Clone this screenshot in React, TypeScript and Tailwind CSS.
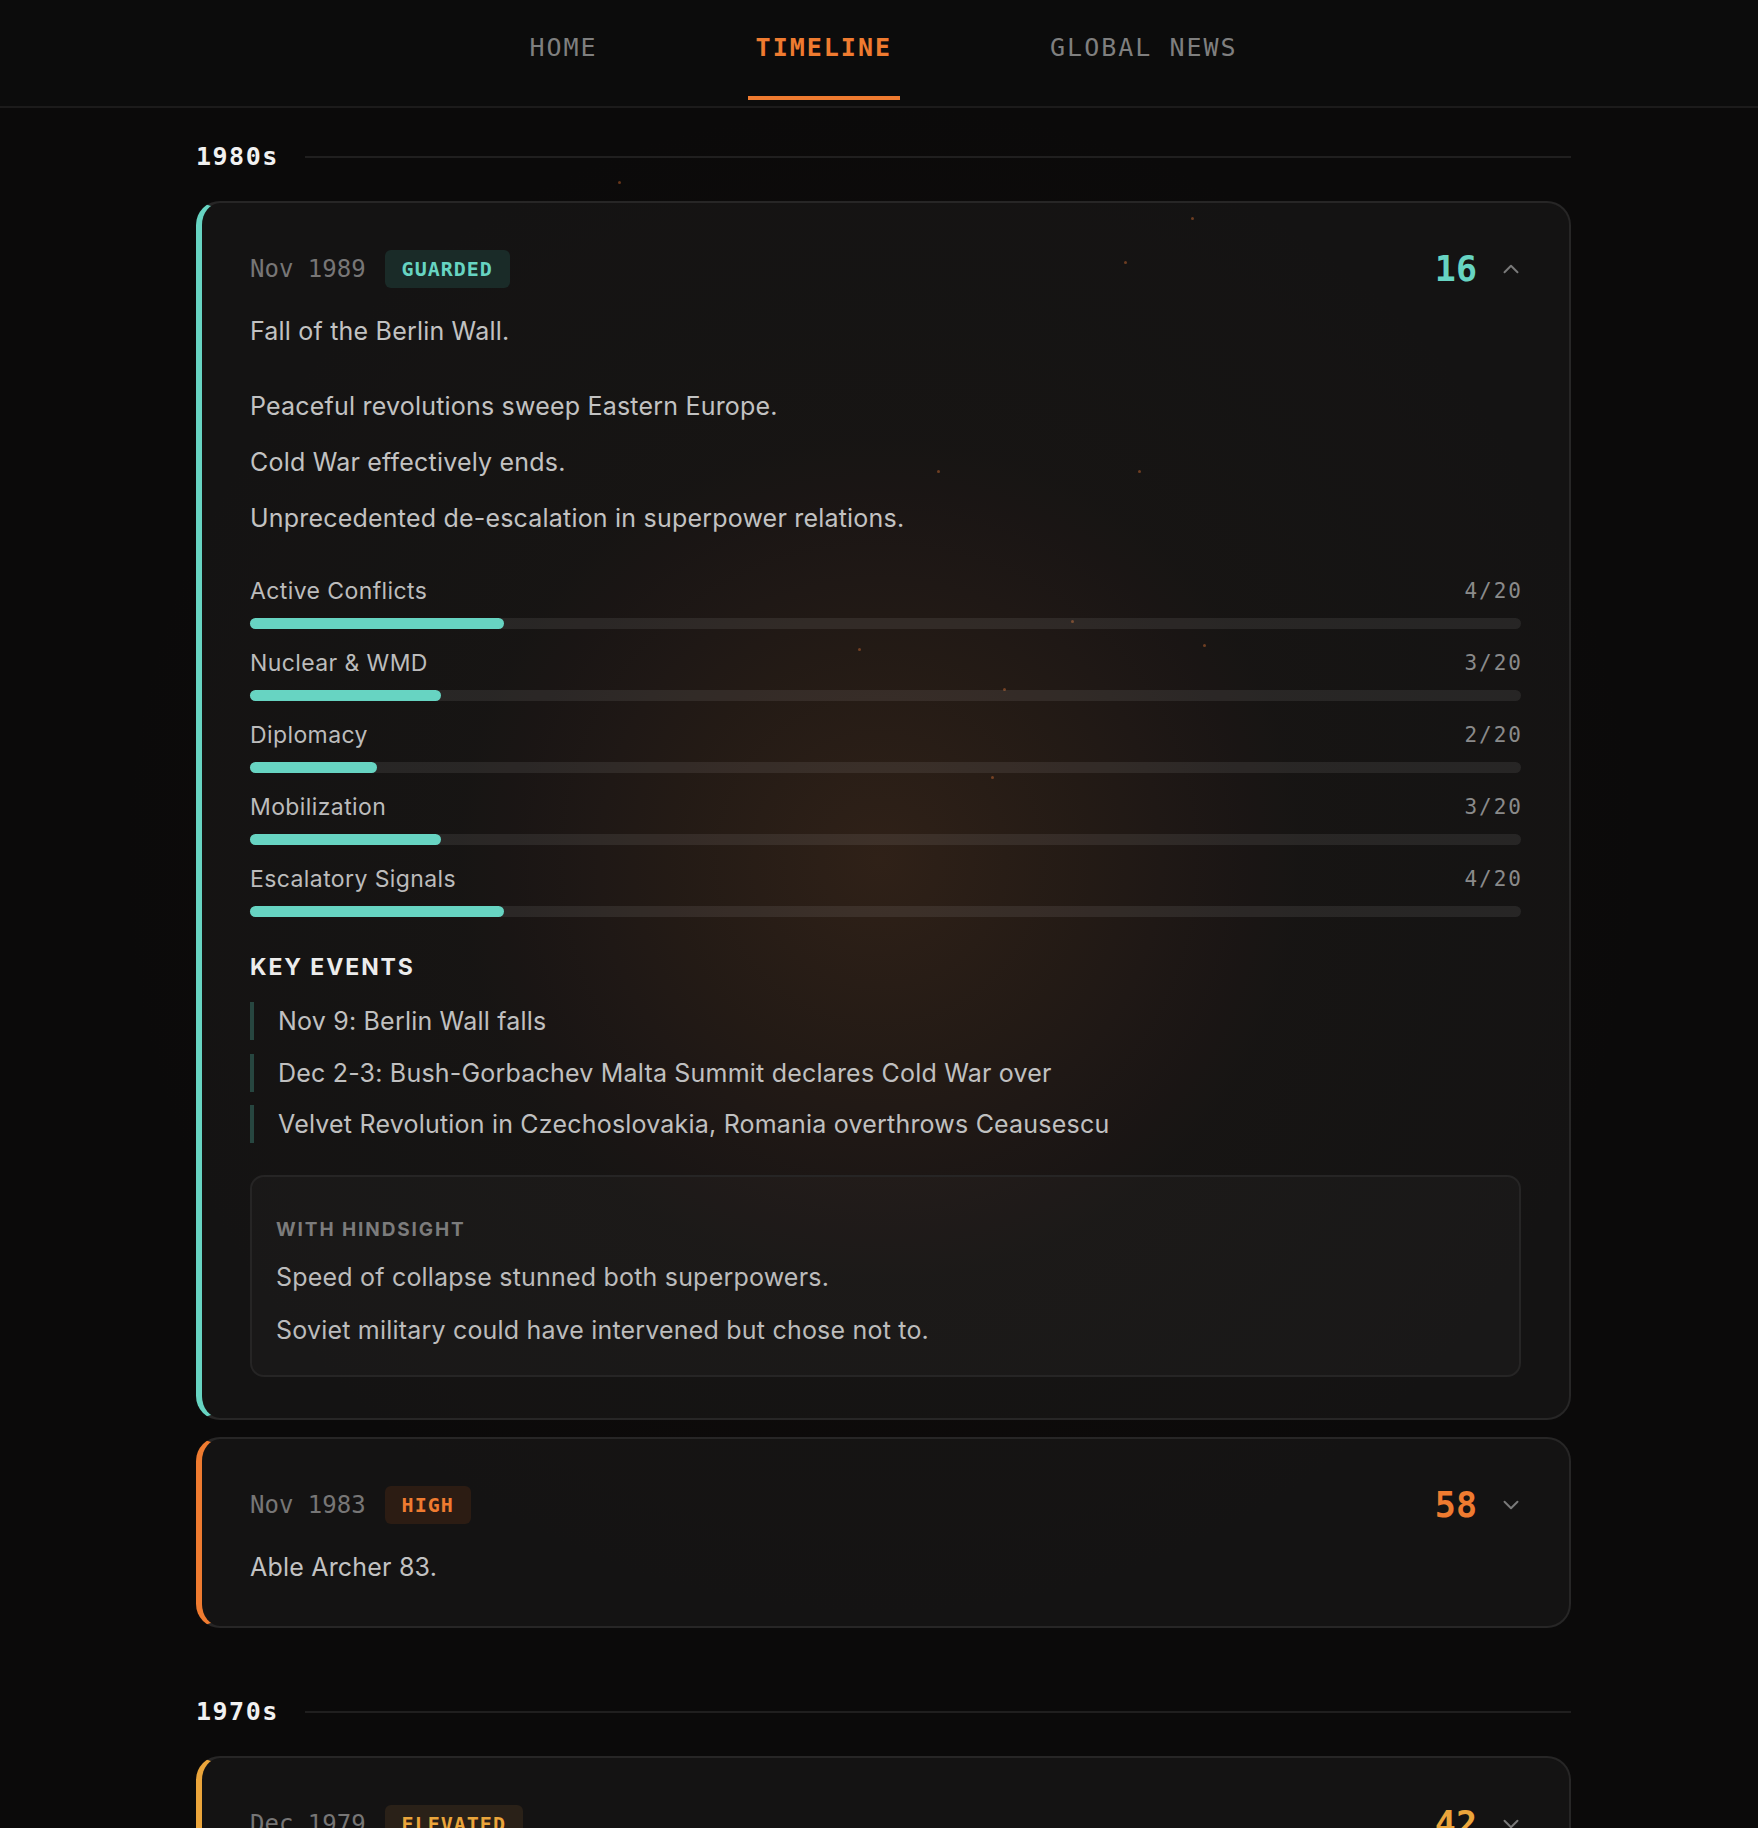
import React from "react";
import { ChevronUp, ChevronDown } from "lucide-react";

type Metric = { label: string; value: number };

type Entry = {
	date: string;
	level: "GUARDED" | "HIGH" | "ELEVATED";
	score: number;
	title: string;
	details?: string[];
	metrics?: Metric[];
	keyEvents?: string[];
	hindsight?: string[];
	open?: boolean;
};

const levelStyles = {
	GUARDED: {
		edge: "border-l-[#67d4c2]",
		badge: "bg-[#1a2b28] text-[#67d4c2]",
		score: "text-[#67d4c2]",
		bar: "bg-[#67d4c2]",
	},
	HIGH: {
		edge: "border-l-[#ef7b30]",
		badge: "bg-[#2c1c13] text-[#ef7b30]",
		score: "text-[#ef7b30]",
		bar: "bg-[#ef7b30]",
	},
	ELEVATED: {
		edge: "border-l-[#eba53b]",
		badge: "bg-[#2a2118] text-[#eba53b]",
		score: "text-[#eba53b]",
		bar: "bg-[#eba53b]",
	},
};

const decades: { label: string; entries: Entry[] }[] = [
	{
		label: "1980s",
		entries: [
			{
				date: "Nov 1989",
				level: "GUARDED",
				score: 16,
				open: true,
				title: "Fall of the Berlin Wall.",
				details: [
					"Peaceful revolutions sweep Eastern Europe.",
					"Cold War effectively ends.",
					"Unprecedented de-escalation in superpower relations.",
				],
				metrics: [
					{ label: "Active Conflicts", value: 4 },
					{ label: "Nuclear & WMD", value: 3 },
					{ label: "Diplomacy", value: 2 },
					{ label: "Mobilization", value: 3 },
					{ label: "Escalatory Signals", value: 4 },
				],
				keyEvents: [
					"Nov 9: Berlin Wall falls",
					"Dec 2-3: Bush-Gorbachev Malta Summit declares Cold War over",
					"Velvet Revolution in Czechoslovakia, Romania overthrows Ceausescu",
				],
				hindsight: [
					"Speed of collapse stunned both superpowers.",
					"Soviet military could have intervened but chose not to.",
				],
			},
			{
				date: "Nov 1983",
				level: "HIGH",
				score: 58,
				title: "Able Archer 83.",
			},
		],
	},
	{
		label: "1970s",
		entries: [
			{
				date: "Dec 1979",
				level: "ELEVATED",
				score: 42,
				title: "Soviet invasion of Afghanistan.",
			},
		],
	},
];

// faint ember specks floating over the page
const specks = [
	[618, 181],
	[937, 470],
	[1071, 620],
	[858, 648],
	[1203, 644],
	[1003, 688],
	[1138, 470],
	[1124, 261],
	[1191, 217],
	[991, 776],
];

const EntryCard = ({ entry }: { entry: Entry }) => {
	const s = levelStyles[entry.level];
	return (
		<div
			className={`rounded-[24px] border-2 border-[#272626] border-l-[6px] ${s.edge} bg-white/[0.035] pl-12 pr-12 pt-[46px] pb-[41px]`}
		>
			<div className="flex items-center justify-between h-10">
				<div className="flex items-center gap-[19px]">
					<span className="font-['DejaVu_Sans_Mono',monospace] text-[24px] text-[#777676]">
						{entry.date}
					</span>
					<span
						className={`font-['DejaVu_Sans_Mono',monospace] font-bold text-[20px] tracking-[1px] leading-[38px] px-[17px] rounded-[6px] ${s.badge}`}
					>
						{entry.level}
					</span>
				</div>
				<div className="flex items-center gap-[21px] mr-[-3px]">
					<span
						className={`font-['DejaVu_Sans_Mono',monospace] font-bold text-[35px] leading-10 ${s.score}`}
					>
						{entry.score}
					</span>
					{entry.open ? (
						<ChevronUp size={26} strokeWidth={1.8} color="#7a7a7a" />
					) : (
						<ChevronDown size={26} strokeWidth={1.8} color="#7a7a7a" />
					)}
				</div>
			</div>

			<p className="mt-6 text-[25px] tracking-[0.2px] leading-9 text-[#c2c2c2]">
				{entry.title}
			</p>

			{entry.details && (
				<div className="mt-[39px] flex flex-col gap-5">
					{entry.details.map((d, i) => (
						<p key={i} className="text-[25px] tracking-[0.2px] leading-9 text-[#c2c2c2]">
							{d}
						</p>
					))}
				</div>
			)}

			{entry.metrics && (
				<div className="mt-10 flex flex-col gap-[19px]">
					{entry.metrics.map((m, i) => (
						<div key={i}>
							<div className="flex items-center justify-between leading-[30px]">
								<span className="text-[23px] tracking-[0.4px] text-[#bcbcbc]">{m.label}</span>
								<span className="font-['DejaVu_Sans_Mono',monospace] text-[21px] tracking-[2px] mr-[-2px] text-[#8a8a8a]">
									{m.value}/20
								</span>
							</div>
							<div className="mt-3 h-[11px] rounded-full bg-white/[0.08]">
								<div
									className={`h-full rounded-full ${s.bar}`}
									style={{ width: `${(m.value / 20) * 100}%` }}
								/>
							</div>
						</div>
					))}
				</div>
			)}

			{entry.keyEvents && (
				<>
					<h3 className="mt-[36px] text-[23px] leading-7 font-bold tracking-[1.9px] text-[#ececec]">
						KEY EVENTS
					</h3>
					<ul className="mt-[21px] flex flex-col gap-[13.5px]">
						{entry.keyEvents.map((e, i) => (
							<li
								key={i}
								className="border-l-4 border-[#274640] pl-6 text-[25px] tracking-[0.2px] leading-[38px] text-[#c0c0c0]"
							>
								{e}
							</li>
						))}
					</ul>
				</>
			)}

			{entry.hindsight && (
				<div className="mt-8 rounded-[14px] border-2 border-[#262525] bg-white/[0.025] px-6 pt-[41px] pb-[27px]">
					<h4 className="text-[19px] leading-6 font-bold tracking-[1.9px] text-[#7c7c7c]">
						WITH HINDSIGHT
					</h4>
					<div className="mt-[17px] flex flex-col gap-[17px]">
						{entry.hindsight.map((h, i) => (
							<p key={i} className="text-[25px] tracking-[0.2px] leading-9 text-[#bcbcbc]">
								{h}
							</p>
						))}
					</div>
				</div>
			)}
		</div>
	);
};

export default function App() {
	const tabs = ["HOME", "TIMELINE", "GLOBAL NEWS"];
	return (
		<div className="relative min-h-screen overflow-hidden bg-[#0b0a0a] pl-[9px] font-['Inter',sans-serif]">
			<div className="pointer-events-none absolute inset-0 bg-[radial-gradient(circle_at_880px_860px,rgba(140,78,36,0.22),rgba(60,30,15,0.08)_420px,transparent_760px)]" />
			{specks.map(([x, y], i) => (
				<span
					key={i}
					className="pointer-events-none absolute h-[3px] w-[3px] rounded-full bg-[#c2612a]/50"
					style={{ left: x, top: y }}
				/>
			))}

			<nav className="relative ml-[-9px] pl-[9px] flex justify-center gap-[142px] pb-[6px] border-b-2 border-[#1c1b1b] bg-[#0d0c0c]/80">
				{tabs.map((t) => (
					<a
						key={t}
						className={`px-2 pt-8 pb-8 leading-8 border-b-4 font-['DejaVu_Sans_Mono',monospace] text-[25px] tracking-[2px] ${
							t === "TIMELINE"
								? "border-[#ef7b30] text-[#ef7b30] font-bold"
								: "border-transparent text-[#7f7f7f]"
						}`}
					>
						{t}
					</a>
				))}
			</nav>

			<main className="relative mx-auto w-[1375px] pt-[35px] pb-24">
				{decades.map((d, di) => (
					<section key={d.label} className={di > 0 ? "mt-[70px]" : ""}>
						<div className="mb-[30px] flex items-center gap-[26px]">
							<h2 className="font-['DejaVu_Sans_Mono',monospace] font-bold text-[25px] leading-7 tracking-[1.5px] text-[#f1f1f1]">
								{d.label}
							</h2>
							<div className="h-[2px] flex-1 bg-[#201f1f]" />
						</div>
						<div className="flex flex-col gap-[17px]">
							{d.entries.map((e, i) => (
								<EntryCard key={i} entry={e} />
							))}
						</div>
					</section>
				))}
			</main>
		</div>
	);
}
